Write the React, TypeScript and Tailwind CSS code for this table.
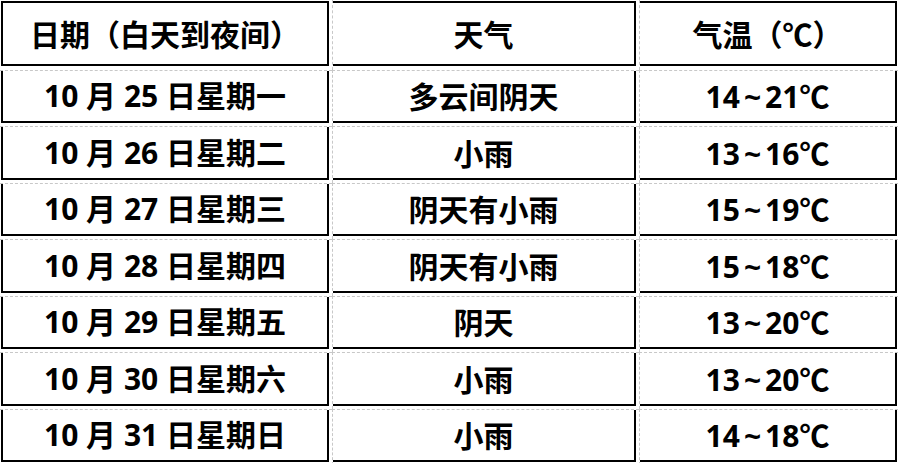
const rows: [string, string, string, string][] = [
  ['10 月 25 日星期一', '多云间阴天', '14', '21'],
  ['10 月 26 日星期二', '小雨', '13', '16'],
  ['10 月 27 日星期三', '阴天有小雨', '15', '19'],
  ['10 月 28 日星期四', '阴天有小雨', '15', '18'],
  ['10 月 29 日星期五', '阴天', '13', '20'],
  ['10 月 30 日星期六', '小雨', '13', '20'],
  ['10 月 31 日星期日', '小雨', '14', '18'],
];

const header = ['日期（白天到夜间）', '天气', '气温（℃）'];

// slot = excel-ish gridline cell, inner box carries the black border
function Cell({ row, col, children }: { row: number; col: number; children: React.ReactNode }) {
  const slot = [
    'flex min-h-0',
    row > 0 ? 'border-t border-dashed border-[#c8c8c8]' : 'pt-[1px]',
    col > 0 ? 'border-l border-dashed border-[#c8c8c8]' : 'pl-[1px]',
    col === 2 ? 'pr-[1px]' : 'pr-[3px]',
    row === 0 ? 'pb-[4px]' : 'pb-[3px]',
  ].join(' ');
  const box = [
    'flex-1 flex items-center justify-center border-r-2 border-b-2 border-black',
    row === 0 ? 'border-t-2' : '',
    col === 0 ? 'border-l-2' : '',
  ].join(' ');
  return (
    <div className={slot}>
      <div className={box}>
        <span className="text-[30px] font-bold text-black leading-none whitespace-pre">{children}</span>
      </div>
    </div>
  );
}

export default function App() {
  return (
    <div className="w-[898px] h-[463px] overflow-hidden bg-white font-['Noto_Sans','Noto_Sans_CJK_SC',sans-serif]">
      <div className="grid grid-cols-[332px_307px_259px] grid-rows-[70px_56px_57px_56px_57px_56px_57px_56px]">
        {header.map((h, c) => (
          <Cell key={h} row={0} col={c}>
            <span className="font-['Noto_Sans_CJK_SC',sans-serif]">{h}</span>
          </Cell>
        ))}
        {rows.map((r, i) => [
          <Cell key={`${i}-0`} row={i + 1} col={0}>{r[0]}</Cell>,
          <Cell key={`${i}-1`} row={i + 1} col={1}>
            <span className="font-['Noto_Sans_CJK_SC',sans-serif]">{r[1]}</span>
          </Cell>,
          <Cell key={`${i}-2`} row={i + 1} col={2}>
            {r[2]}
            <span className="mx-[4px]">~</span>
            {r[3]}
            <span className="font-['Noto_Sans_CJK_SC',sans-serif]">℃</span>
          </Cell>,
        ])}
      </div>
    </div>
  );
}
